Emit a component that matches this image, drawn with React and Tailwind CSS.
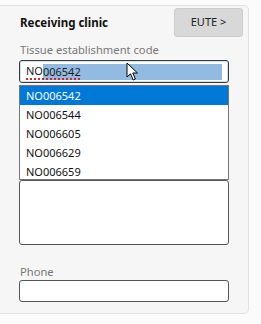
const codes = ['NO006542', 'NO006544', 'NO006605', 'NO006629', 'NO006659'];

function Cursor() {
  return (
    <svg width="13" height="20" viewBox="0 0 13 20" className="absolute left-[126px] top-[56px]">
      <path d="M1 1 L1 15 L4.5 11.8 L7.2 18 L9.4 17 L6.8 11 L11.5 11 Z" fill="#fff" stroke="#000" strokeWidth="1" strokeLinejoin="round" />
    </svg>
  );
}

export default function App() {
  return (
    <div className="w-[261px] h-[324px] bg-[#fbfbfb] pt-[5px] font-['Noto_Sans','Open_Sans',sans-serif] text-[11px] text-[#1a1a1a]">
      <div className="relative w-[249px] h-[309px] bg-[#f6f6f6] border border-l-0 border-[#e2e2e2] rounded-r-[5px] pl-[19px] pr-[5px]">
        <div className="flex items-start justify-between pt-[2px]">
          <div className="pl-px pt-[6px] text-[11.5px] font-bold text-[#111]">Receiving clinic</div>
          <button className="w-[69px] h-[29px] bg-[#d8d8d8] border border-[#cdcdcd] rounded-[3px] text-[11px] text-[#222]">
            EUTE &gt;
          </button>
        </div>
        <div className="pl-px mt-[5px] h-[16px] leading-[16px] text-[11.2px] text-[#787878]">Tissue establishment code</div>
        <div className="mt-[2px] w-[210px] h-[23px] bg-white border border-[#3a3a3a] rounded-[3px] shadow-[inset_0_0_0_1px_#cfe0f2] flex items-center pl-[6px] pr-[6px]">
          <span className="underline decoration-dotted decoration-[#e02020] decoration-[1.5px] underline-offset-[3px]">NO</span>
          <span className="flex-1 h-[16px] leading-[16px] bg-[#93bbe2] underline decoration-dotted decoration-[#e02020] decoration-[1.5px] underline-offset-[3px]">006542</span>
        </div>
        <div className="h-[97px]" />
        <div className="w-[210px] h-[65px] bg-white border border-[#555] rounded-[3px]" />
        <div className="pl-px mt-[19px] h-[16px] leading-[16px] text-[11.2px] text-[#787878]">Phone</div>
        <div className="w-[210px] h-[22px] bg-white border border-[#555] rounded-[3px]" />

        <div className="absolute left-[19px] top-[79px] w-[210px] h-[95px] bg-white border border-[#777] overflow-hidden">
          {codes.map((c, i) => (
            <div
              key={c}
              className={
                i === 0
                  ? 'h-[19px] leading-[19px] pl-[6px] bg-[#0078d7] text-white'
                  : 'h-[19px] leading-[19px] pl-[6px] text-[#111]'
              }
            >
              {c}
            </div>
          ))}
        </div>
        <Cursor />
      </div>
    </div>
  );
}
